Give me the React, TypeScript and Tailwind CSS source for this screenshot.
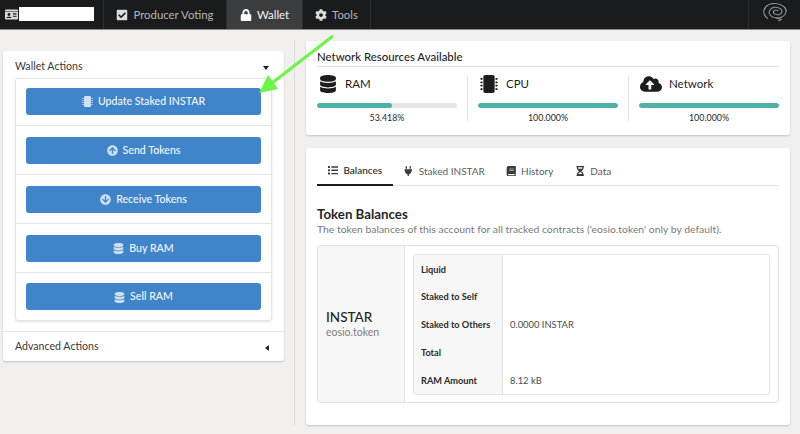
import React from "react";
import {
  FaIdCard, FaCheckSquare, FaLock, FaCog, FaDatabase, FaMicrochip, FaCloudUploadAlt,
  FaArrowCircleUp, FaArrowCircleDown, FaList, FaPlug, FaBook, FaHourglassHalf,
} from "react-icons/fa";

function NavItem({ icon, label, active, w }: { icon: React.ReactNode; label: string; active?: boolean; w: string }) {
  return (
    <div className={`flex items-center justify-center gap-[5px] h-full border-r border-[#2c2d2e] text-[11.4px] ${w} ${active ? "bg-[#3c3d3e] text-[#f4f4f4]" : "text-[#b5b5b5]"}`}>
      <span className={`text-[12px] ${active ? "text-white" : "text-[#dcdcdc]"}`}>{icon}</span>
      <span>{label}</span>
    </div>
  );
}

function ActionRow({ icon, label, h, last }: { icon: React.ReactNode; label: string; h: string; last?: boolean }) {
  return (
    <div className={`px-[10px] flex items-center border-[#e4e4e4] ${h} ${last ? "" : "border-b"}`}>
      <div className="w-full h-[27px] pt-[1px] bg-[#4085c9] rounded-[3px] text-[#f2f6fb] flex items-center justify-center gap-[5px] text-[10.6px] font-medium">
        <span className="text-[11px] text-[#cfe0f2]">{icon}</span>
        <span>{label}</span>
      </div>
    </div>
  );
}

function Resource({ icon, label, pct, value, size, last }: { icon: React.ReactNode; label: string; pct: number; value: string; size: string; last?: boolean }) {
  return (
    <div className={`flex flex-col shrink-0 ${last ? "w-[140px]" : "w-[151px] pr-[10px] border-r border-[#e2e2e2] mr-[10px]"}`}>
      <div className="flex items-center h-[14px] shrink-0 gap-[6px] text-[#1d1d1d] text-[11.5px]">
        <span className={`flex justify-center ${size} ${last ? "w-[24px]" : "w-[22px]"}`}>{icon}</span>
        <span>{label}</span>
      </div>
      <div className="h-[5px] mt-[12px] shrink-0 rounded-[3px] bg-[#e6e6e6] overflow-hidden">
        <div className="h-full rounded-[3px] bg-[#4eb1a9]" style={{ width: `${pct}%` }} />
      </div>
      <div className="text-center text-[8.9px] text-[#2a2a2a] mt-[3px] leading-[14px] shrink-0">{value}</div>
    </div>
  );
}

function Tab({ icon, label, active, w }: { icon: React.ReactNode; label: string; active?: boolean; w: string }) {
  return (
    <div className={`h-[30px] flex items-center justify-center gap-[5px] text-[10px] -mb-px ${w} ${active ? "border-b-2 border-[#1b1c1d] text-[#1f1f1f] font-medium" : "text-[#5c5c5c]"}`}>
      <span className="text-[10.5px] text-[#3a3a3a]">{icon}</span>
      <span>{label}</span>
    </div>
  );
}

function Row({ label, value }: { label: string; value?: string }) {
  return (
    <div className="flex h-[27.8px] items-center">
      <div className="w-[89px] h-full flex items-center pl-[7px] pt-[1px] bg-[#f7f7f7] border-r border-[#e4e4e4] text-[9.2px] font-bold text-[#2b2b2b] shrink-0">{label}</div>
      <div className="pl-[7px] pt-[1px] text-[9.4px] text-[#4d4d4d]">{value}</div>
    </div>
  );
}

export default function App() {
  return (
    <div className="relative w-[800px] h-[434px] overflow-hidden bg-[#f1f0ee] font-['Lato','Open_Sans',sans-serif]">
      <header className="h-[30px] bg-[#1a1b1d] border-b border-[#8a8a8a] flex items-stretch">
        <div className="w-[104px] h-full border-r border-[#2c2d2e] flex items-center pl-[5px] gap-[1px]">
          <FaIdCard className="text-[#d8d8d8] text-[13px]" />
          <div className="w-[75px] h-[14px] bg-white -mt-[1px]" />
        </div>
        <NavItem w="w-[123px]" icon={<FaCheckSquare />} label="Producer Voting" />
        <NavItem w="w-[76px]" active icon={<FaLock />} label="Wallet" />
        <NavItem w="w-[68px]" icon={<FaCog />} label="Tools" />
        <div className="flex-1" />
        <div className="w-[52px] h-full border-l border-[#2c2d2e] flex items-start justify-center pt-[2px]">
          <svg width="26" height="20" viewBox="0 0 27 24" fill="none" stroke="#9a9a9a" strokeWidth="1.1" preserveAspectRatio="none">
            <path d="M6 20 C 3 17 1 14 2 10 C 3 4 9 1 15 2 C 21 3 26 7 25 12 C 24 17 19 20 14 19 C 9 18 6 14 8 10 C 10 6 15 5 19 8 C 22 10 21 14 18 15 C 15 16 11 14 12 11 C 13 9 16 9 17 11" />
            <path d="M14 19 L20 21 L17 23" />
          </svg>
        </div>
      </header>

      <main className="flex h-[404px]">
        <aside className="w-[295px] border-r border-[#dcdcdc] my-[10px] h-[385px] pl-[3px] pr-[10px] pt-[11px] shrink-0">
          <div className="bg-white rounded-[3px] shadow-[0_1px_2px_rgba(0,0,0,0.2)] h-[310px]">
            <div className="flex items-center justify-between h-[27px] pt-[5px] pl-[12px] pr-[15px] text-[10.6px] text-[#3a3a3a]">
              <span>Wallet Actions</span>
              <span className="w-0 h-0 border-x-[3.5px] border-x-transparent border-t-[4px] border-t-[#222] mt-[2px]" />
            </div>
            <div className="mx-[12px] border border-[#e4e4e4] rounded-[3px] shadow-[0_1px_2px_rgba(0,0,0,0.12)]">
              <ActionRow h="h-[47px] pb-[2px]" icon={<FaMicrochip />} label="Update Staked INSTAR" />
              <ActionRow h="h-[49px]" icon={<FaArrowCircleUp />} label="Send Tokens" />
              <ActionRow h="h-[49px]" icon={<FaArrowCircleDown />} label="Receive Tokens" />
              <ActionRow h="h-[49px]" icon={<FaDatabase />} label="Buy RAM" />
              <ActionRow h="h-[47px]" icon={<FaDatabase />} label="Sell RAM" last />
            </div>
            <div className="mt-[10px] border-t border-[#e8e8e8] h-[29px] pt-[2px] flex items-center justify-between pl-[12px] pr-[15px] text-[10.6px] text-[#3a3a3a]">
              <span>Advanced Actions</span>
              <span className="w-0 h-0 border-y-[3.5px] border-y-transparent border-r-[4px] border-r-[#222] mt-[2px]" />
            </div>
          </div>
        </aside>

        <section className="flex-1 pl-[11px] pr-[10px] pt-[11px] flex flex-col gap-[13px]">
          <div className="bg-white rounded-[3px] shadow-[0_1px_2px_rgba(0,0,0,0.2)] h-[94px] px-[11px] pt-[7px]">
            <div className="text-[11.4px] leading-[18px] text-[#1f1f1f] font-medium border-b border-[#e2e2e2]">Network Resources Available</div>
            <div className="flex mt-[10px] h-[44px]">
              <Resource size="text-[18px]" icon={<FaDatabase />} label="RAM" pct={53.418} value="53.418%" />
              <Resource size="text-[18px]" icon={<FaMicrochip />} label="CPU" pct={100} value="100.000%" />
              <Resource size="text-[22px]" icon={<FaCloudUploadAlt />} label="Network" pct={100} value="100.000%" last />
            </div>
          </div>

          <div className="bg-white rounded-[3px] shadow-[0_1px_2px_rgba(0,0,0,0.2)] h-[277px] px-[11px] pt-[8px]">
            <div className="flex border-b border-[#e2e2e2] h-[30px]">
              <Tab w="w-[76px]" active icon={<FaList />} label="Balances" />
              <Tab w="w-[102px]" icon={<FaPlug />} label="Staked INSTAR" />
              <Tab w="w-[69px]" icon={<FaBook />} label="History" />
              <Tab w="w-[58px]" icon={<FaHourglassHalf />} label="Data" />
            </div>
            <div className="mt-[20px] text-[13.3px] leading-[17px] font-bold text-[#262626]">Token Balances</div>
            <div className="text-[10.4px] leading-[12px] text-[#7a7a7a]">The token balances of this account for all tracked contracts ('eosio.token' only by default).</div>
            <div className="flex mt-[10px] h-[158px] border border-[#e2e2e2] rounded-[3px]">
              <div className="w-[87px] bg-[#f7f7f7] border-r border-[#e2e2e2] flex flex-col justify-center pl-[8px] shrink-0">
                <div className="text-[13.5px] leading-[16px] font-medium text-[#262626]">INSTAR</div>
                <div className="text-[10.5px] leading-[14px] text-[#7d7d7d]">eosio.token</div>
              </div>
              <div className="flex-1 p-[8px]">
                <div className="border border-[#e4e4e4] rounded-[3px] overflow-hidden">
                  <Row label="Liquid" />
                  <Row label="Staked to Self" />
                  <Row label="Staked to Others" value="0.0000 INSTAR" />
                  <Row label="Total" />
                  <Row label="RAM Amount" value="8.12 kB" />
                </div>
              </div>
            </div>
          </div>
        </section>
      </main>

      <svg className="absolute left-0 top-0 pointer-events-none" width="800" height="434" fill="none">
        <path d="M333 36 L272 83" stroke="#6cf542" strokeWidth="3" />
        <path d="M259 93 L268 75 L278 89 Z" fill="#6cf542" />
      </svg>
    </div>
  );
}
